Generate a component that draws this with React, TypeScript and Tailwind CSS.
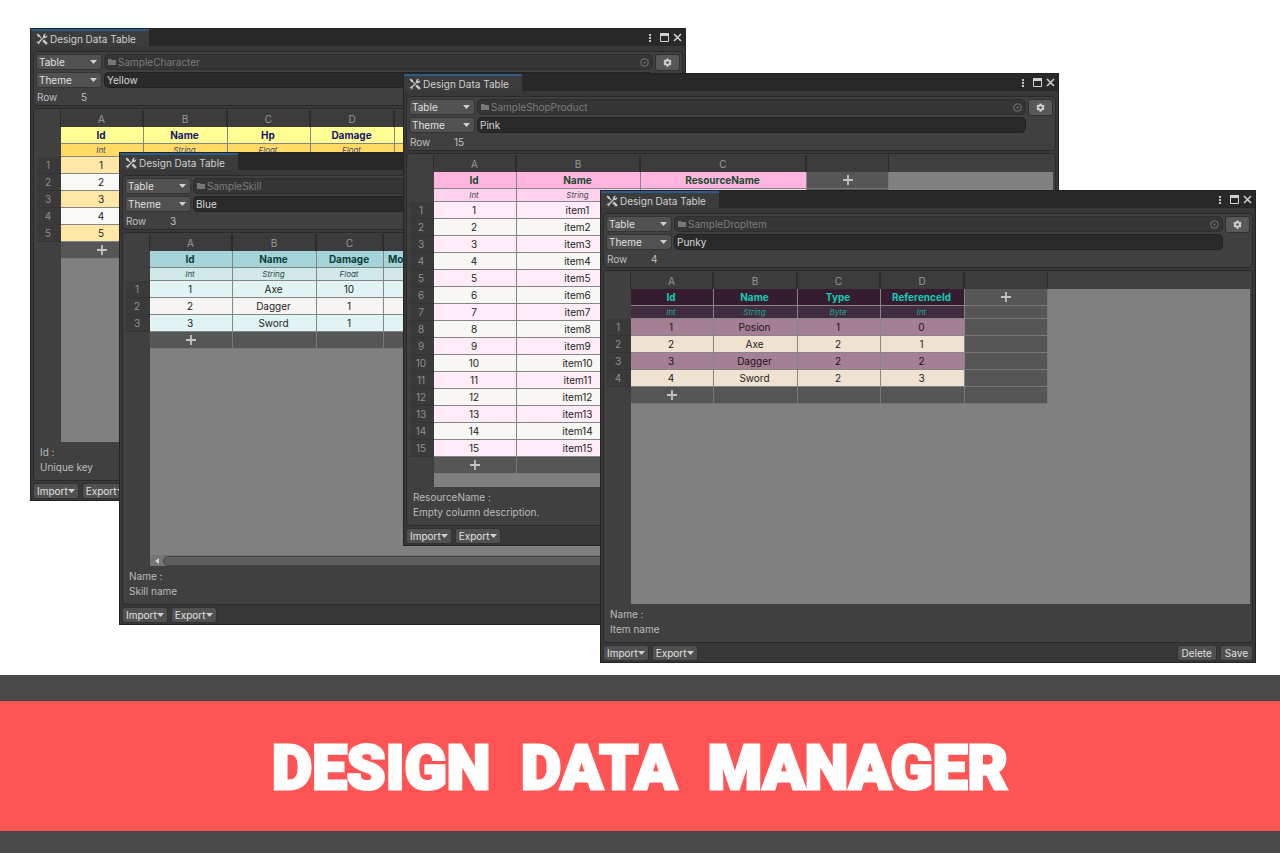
import React from "react";

type Theme = {
  name: string;
  head: string;
  type: string;
  odd: string;
  even: string;
};

type Column = { name: string; type: string; width: number; left?: boolean };

type WindowData = {
  id: string;
  asset: string;
  theme: Theme;
  columns: Column[];
  rows: string[][];
  addWidth?: number;
  note: [string, string];
  scrollbar?: boolean;
  place: string;
};

const yellow: Theme = {
  name: "Yellow",
  head: "bg-[#ffff94] text-[#14146a]",
  type: "bg-[#ffdb66] text-[#3f4a78]",
  odd: "bg-[#ffe7a8] text-[#222222]",
  even: "bg-[#f8f9f4] text-[#222222]",
};
const blue: Theme = {
  name: "Blue",
  head: "bg-[#a5d3da] text-[#0b4038]",
  type: "bg-[#d0e8e8] text-[#2c4a48]",
  odd: "bg-[#e1f4f3] text-[#222222]",
  even: "bg-[#f7f5f3] text-[#222222]",
};
const pink: Theme = {
  name: "Pink",
  head: "bg-[#ffb5e0] text-[#174a2c]",
  type: "bg-[#ffd3ee] text-[#3d4a48]",
  odd: "bg-[#ffecf8] text-[#222222]",
  even: "bg-[#f8f7f4] text-[#222222]",
};
const punky: Theme = {
  name: "Punky",
  head: "bg-[#351c2e] text-[#12cbb8]",
  type: "bg-[#422c3f] text-[#14a596]",
  odd: "bg-[#a57f93] text-[#1c1418]",
  even: "bg-[#efe2d1] text-[#222222]",
};

const windows: WindowData[] = [
  {
    id: "character",
    asset: "SampleCharacter",
    theme: yellow,
    columns: [
      { name: "Id", type: "Int", width: 83 },
      { name: "Name", type: "String", width: 84 },
      { name: "Hp", type: "Float", width: 83 },
      { name: "Damage", type: "Float", width: 84 },
      { name: "", type: "", width: 83 },
    ],
    rows: ["1", "2", "3", "4", "5"].map((n) => [n, "", "", "", ""]),
    note: ["Id :", "Unique key"],
    place: "left-[30px] top-[28px]",
  },
  {
    id: "skill",
    asset: "SampleSkill",
    theme: blue,
    columns: [
      { name: "Id", type: "Int", width: 83 },
      { name: "Name", type: "String", width: 84 },
      { name: "Damage", type: "Float", width: 67 },
      { name: "Mo", type: "", width: 83, left: true },
    ],
    rows: [
      ["1", "Axe", "10", ""],
      ["2", "Dagger", "1", ""],
      ["3", "Sword", "1", ""],
    ],
    note: ["Name :", "Skill name"],
    scrollbar: true,
    place: "left-[119px] top-[152px]",
  },
  {
    id: "shop",
    asset: "SampleShopProduct",
    theme: pink,
    columns: [
      { name: "Id", type: "Int", width: 83 },
      { name: "Name", type: "String", width: 124 },
      { name: "ResourceName", type: "", width: 166 },
    ],
    rows: Array.from({ length: 15 }, (_, i) => [`${i + 1}`, `item${i + 1}`, ""]),
    addWidth: 82,
    note: ["ResourceName :", "Empty column description."],
    place: "left-[403px] top-[73px]",
  },
  {
    id: "drop",
    asset: "SampleDropItem",
    theme: punky,
    columns: [
      { name: "Id", type: "Int", width: 83 },
      { name: "Name", type: "String", width: 84 },
      { name: "Type", type: "Byte", width: 83 },
      { name: "ReferenceId", type: "Int", width: 84 },
    ],
    rows: [
      ["1", "Posion", "1", "0"],
      ["2", "Axe", "2", "1"],
      ["3", "Dagger", "2", "2"],
      ["4", "Sword", "2", "3"],
    ],
    addWidth: 83,
    note: ["Name :", "Item name"],
    place: "left-[600px] top-[190px]",
  },
];

function ToolsIcon() {
  return (
    <svg viewBox="0 0 12 12" className="size-3 shrink-0" fill="#c8c8c8" aria-hidden="true">
      <path d="M7 4.200C6.600 2.200 8.100.4 10.200.8L8.700 2.400 9.600 3.400 11.200 1.900C11.700 4 10 5.500 8 5.100L3.600 9.600C3.900 10.800 3 11.600 1.700 11.500L2.500 10.500 1.600 9.600.6 10.400C.4 9.200 1.300 8.300 2.500 8.600Z" />
      <path d="M.6 1.500 1.600.5 4 2.300 4.200 3.200 5.700 4.700 4.800 5.600 3.200 4.100 2.300 4Z" />
      <path d="M6.300 8.200 8.200 6.400 11.400 9.700 11.400 11.300 9.800 11.400Z" />
    </svg>
  );
}

function Caret() {
  return (
    <svg viewBox="0 0 7 4" className="h-1 w-[7px] shrink-0" fill="#d0d0d0" aria-hidden="true">
      <path d="M0 0h7L3.500 4z" />
    </svg>
  );
}

function Plus() {
  return (
    <svg viewBox="0 0 10 10" className="mx-auto size-2.5" stroke="#c4c4c4" strokeWidth="1.800" aria-hidden="true">
      <path d="M5 0v10M0 5h10" />
    </svg>
  );
}

function Picker({ label }: { label: string }) {
  return (
    <div className="grid h-[14px] w-16 shrink-0 items-center rounded-xs bg-[#515151] shadow-[0_0_0_1px_#343434]">
      <select
        aria-label={label}
        className="col-start-1 row-start-1 h-[14px] w-full appearance-none bg-transparent pl-0.5 text-[10px] leading-[14px] text-[#e0e0e0] outline-none"
      >
        <option>{label}</option>
      </select>
      <span className="pointer-events-none col-start-1 row-start-1 mr-1 justify-self-end">
        <Caret />
      </span>
    </div>
  );
}

function SmallButton({ label, menu }: { label: string; menu?: boolean }) {
  return (
    <button
      type="button"
      className={`flex h-[14px] items-center rounded-xs bg-[#505050] text-[10px] leading-[14px] text-[#e0e0e0] shadow-[0_0_0_1px_#323232] ${menu ? "px-[3px]" : "px-1"}`}
    >
      {label}
      {menu && <Caret />}
    </button>
  );
}

function TitleBar() {
  return (
    <header className="flex h-[17px] items-stretch justify-between bg-[#282828]">
      <h2 className="flex w-[118px] items-center gap-0.5 border-t-2 border-[#2c5d87] bg-[#3c3c3c] pl-[5px] text-[10px] leading-[14px] text-[#d0d0d0]">
        <ToolsIcon />
        Design Data Table
      </h2>
      <div className="flex items-center gap-1 pr-[3px]">
        <button type="button" aria-label="Menu" className="flex w-3 justify-center">
          <svg viewBox="0 0 2 10" className="h-2.5 w-0.5" fill="#c8c8c8">
            <path d="M0 1h2v2H0zM0 4h2v2H0zM0 7h2v2H0z" />
          </svg>
        </button>
        <button type="button" aria-label="Maximize">
          <svg viewBox="0 0 9 9" className="size-[9px]" fill="none" stroke="#d0d0d0">
            <path d="M.5 1v7.500h8V1" />
            <path d="M0 1.500h9" strokeWidth="3" />
          </svg>
        </button>
        <button type="button" aria-label="Close">
          <svg viewBox="0 0 9 9" className="size-[9px]" stroke="#d0d0d0" strokeWidth="1.500">
            <path d="m1 1 7 7M8 1 1 8" />
          </svg>
        </button>
      </div>
    </header>
  );
}

function SettingsPanel({ data }: { data: WindowData }) {
  return (
    <section className="flex h-[55px] gap-1 rounded-sm border border-[#2a2a2a] bg-[#404040] pt-[3px] pr-[3px] pl-[3px]">
      <div className="flex min-w-0 flex-1 flex-col gap-1">
        <div className="flex gap-1">
          <Picker label="Table" />
          <div className="flex h-[14px] min-w-0 flex-1 items-center gap-0.5 rounded-sm bg-[#353535] px-[3px] shadow-[0_0_0_1px_#2e2e2e]">
            <svg viewBox="0 0 8 6" className="h-1.5 w-2 shrink-0" fill="#777777" aria-hidden="true">
              <path d="M0 0h3l1 1h4v5H0z" />
            </svg>
            <input
              readOnly
              aria-label="Table asset"
              defaultValue={data.asset}
              className="h-[14px] min-w-0 flex-1 bg-transparent text-[10px] leading-[14px] text-[#7c7c7c] outline-none"
            />
            <svg viewBox="0 0 9 9" className="size-[9px] shrink-0" fill="none" stroke="#777777" aria-hidden="true">
              <circle cx="4.500" cy="4.500" r="3.800" />
              <circle cx="4.500" cy="4.500" r="1" fill="#777777" stroke="none" />
            </svg>
          </div>
        </div>
        <div className="flex gap-1">
          <Picker label="Theme" />
          <input
            aria-label="Theme name"
            defaultValue={data.theme.name}
            className="h-[14px] min-w-0 flex-1 rounded-sm bg-[#2a2a2a] px-0.5 text-[10px] leading-[14px] text-[#d8d8d8] shadow-[0_0_0_1px_#222222] outline-none"
          />
        </div>
        <p className="flex text-[10px] leading-[12px] text-[#c0c0c0]">
          <span className="w-11">Row</span>
          <span>{data.rows.length}</span>
        </p>
      </div>
      <button
        type="button"
        aria-label="Settings"
        className="flex h-[15px] w-[23px] items-center justify-center rounded-xs bg-[#585858] shadow-[0_0_0_1px_#303030]"
      >
        <svg viewBox="0 0 10 10" className="size-[9px]" fill="#d0d0d0" aria-hidden="true">
          <path
            fillRule="evenodd"
            d="M4 .5h2l.4 1.300.8.5 1.300-.3 1 1.700-.9 1v.7l.9 1-1 1.700-1.300-.3-.8.5L6 9.600H4l-.4-1.300-.8-.5-1.300.3-1-1.700.9-1v-.7l-.9-1 1-1.700 1.300.3.8-.5ZM5 3.500a1.600 1.600 0 1 0 0 3.200 1.600 1.600 0 0 0 0-3.200Z"
          />
        </svg>
      </button>
    </section>
  );
}

const line = "border-r border-b border-[#858585]";
const blank = "border-r border-b border-[#787878] bg-[#565656]";

function Sheet({ data }: { data: WindowData }) {
  const { columns, rows, theme, addWidth } = data;
  const tableWidth = 24 + columns.reduce((sum, c) => sum + c.width, 0) + (addWidth ?? 0);
  return (
    <div className="grid min-h-0 flex-1 grid-cols-[24px_1fr] grid-rows-[17px_1fr] overflow-hidden">
      <div className="col-start-2 row-start-2 flex items-end bg-[#808080]">
        {data.scrollbar && (
          <div className="flex h-[11px] w-full items-center bg-[#707070]">
            <span className="flex h-[11px] w-[13px] shrink-0 items-center justify-center bg-[#757575]">
              <svg viewBox="0 0 4 6" className="h-1.5 w-1" fill="#d0d0d0" aria-hidden="true">
                <path d="M4 0v6L0 3z" />
              </svg>
            </span>
            <span className="h-[10px] flex-1 rounded-full border border-[#454545] bg-[#5e5e5e]" />
          </div>
        )}
      </div>
      <table
        className="col-span-2 col-start-1 row-span-2 row-start-1 table-fixed border-separate border-spacing-0 self-start text-center text-[10px]"
        style={{ width: tableWidth }}
      >
        <colgroup>
          <col className="w-6" />
          {columns.map((c, i) => (
            <col key={i} style={{ width: c.width }} />
          ))}
          {addWidth && <col style={{ width: addWidth }} />}
        </colgroup>
        <thead>
          <tr className="h-[17px] leading-[16px] text-[#9a9a9a]">
            <td className="border-r border-[#2c2c2c]" />
            {columns.map((c, i) => (
              <th key={i} scope="col" className="border-r-2 border-[#2c2c2c] bg-[#3c3c3c] p-0 font-normal">
                {c.type && "ABCDE"[i]}
                {c.name === "ResourceName" && "C"}
              </th>
            ))}
            {addWidth && <td className="border-r border-[#2c2c2c] bg-[#3c3c3c]" />}
          </tr>
          <tr className="h-[17px] leading-[16px]">
            <td className="p-0" />
            {columns.map((c, i) => (
              <th key={i} scope="col" className={`${line} ${theme.head} overflow-hidden font-bold ${c.left ? "py-0 pr-0 pl-1 text-left" : "py-0 pr-0.5 pl-0"}`}>
                {c.name}
              </th>
            ))}
            {addWidth && (
              <td className={`${blank} p-0`}>
                <button type="button" aria-label="Add column" className="block w-full">
                  <Plus />
                </button>
              </td>
            )}
          </tr>
          <tr className="h-[13px] text-[8px] leading-[12px]">
            <td className="p-0" />
            {columns.map((c, i) => (
              <td key={i} className={`${line} ${theme.type} py-0 pr-0.5 pl-0 italic`}>
                {c.type}
              </td>
            ))}
            {addWidth && <td className={`${blank} p-0`} />}
          </tr>
        </thead>
        <tbody>
          {rows.map((row, r) => (
            <tr key={r} className="h-[17px] leading-[16px]">
              <th scope="row" className="border-b border-[#343434] bg-[#3a3a3a] py-0 pr-0.5 pl-0 font-normal text-[#909090]">
                {r + 1}
              </th>
              {row.map((cell, i) => (
                <td key={i} className={`${line} ${r % 2 ? theme.even : theme.odd} py-0 pr-0.5 pl-0`}>
                  {cell}
                </td>
              ))}
              {addWidth && <td className={`${blank} p-0`} />}
            </tr>
          ))}
          <tr className="h-[17px] leading-[16px]">
            <td className="p-0" />
            {columns.map((_, i) => (
              <td key={i} className={`${blank} p-0`}>
                {i === 0 && (
                  <button type="button" aria-label="Add row" className="block w-full">
                    <Plus />
                  </button>
                )}
              </td>
            ))}
            {addWidth && <td className={`${blank} p-0`} />}
          </tr>
        </tbody>
      </table>
    </div>
  );
}

function DataWindow({ data }: { data: WindowData }) {
  return (
    <article
      className={`absolute flex h-[473px] w-[656px] flex-col border border-[#232323] bg-[#383838] ${data.place}`}
    >
      <TitleBar />
      <div className="flex min-h-0 flex-1 flex-col gap-0.5 px-0.5 pt-[5px]">
        <SettingsPanel data={data} />
        <section className="flex min-h-0 flex-1 flex-col rounded-sm border border-[#2a2a2a] bg-[#404040] pt-px pr-0.5 pl-[3px]">
          <Sheet data={data} />
          <div className="pt-[3px] pb-[5px] pl-[3px] text-[10px] leading-[15px] text-[#bcbcbc]">
            <p>{data.note[0]}</p>
            <p>{data.note[1]}</p>
          </div>
        </section>
      </div>
      <footer className="flex h-[19px] items-center justify-between px-[3px]">
        <div className="flex gap-[5px]">
          <SmallButton label="Import" menu />
          <SmallButton label="Export" menu />
        </div>
        <div className="flex gap-[5px]">
          <SmallButton label="Delete" />
          <SmallButton label="Save" />
        </div>
      </footer>
    </article>
  );
}

export default function App() {
  return (
    <main className="flex min-h-screen flex-col bg-white font-['Inter',sans-serif]">
      <div className="relative h-[675px] shrink-0 overflow-hidden">
        {windows.map((w) => (
          <DataWindow key={w.id} data={w} />
        ))}
      </div>
      <div className="flex flex-1 flex-col bg-[#4a4a4a] pt-[26px] pb-[22px]">
        <div className="flex flex-1 items-center justify-center bg-[#ff5454] pt-1">
          <h1 className="font-['Roboto',sans-serif] text-[62px] leading-[64px] font-black whitespace-pre text-white [-webkit-text-stroke:3px_white]">
            {"DESIGN  DATA  MANAGER"}
          </h1>
        </div>
      </div>
    </main>
  );
}
